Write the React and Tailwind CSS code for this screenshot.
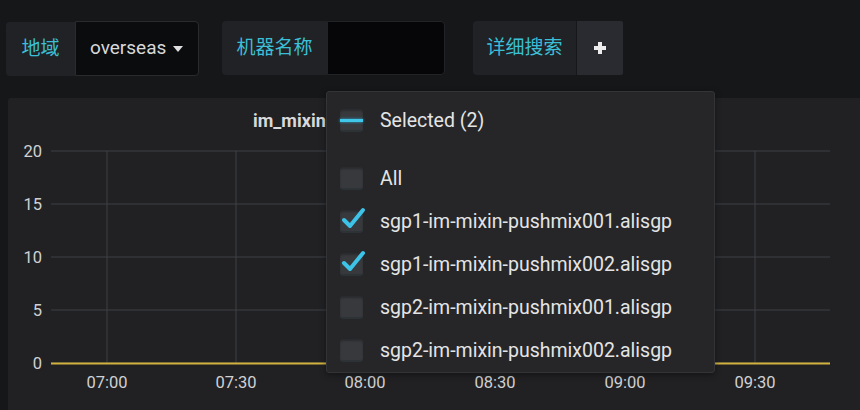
import React from "react";

const font = { fontFamily: "Roboto, 'Noto Sans CJK SC', sans-serif" };

const yTicks = [
  { label: "20", y: 151 },
  { label: "15", y: 204 },
  { label: "10", y: 257 },
  { label: "5", y: 310 },
  { label: "0", y: 363 },
];

const xTicks = [
  { label: "07:00", x: 107 },
  { label: "07:30", x: 236 },
  { label: "08:00", x: 365 },
  { label: "08:30", x: 495 },
  { label: "09:00", x: 625 },
  { label: "09:30", x: 755 },
];

const options = [
  { label: "sgp1-im-mixin-pushmix001.alisgp", checked: true },
  { label: "sgp1-im-mixin-pushmix002.alisgp", checked: true },
  { label: "sgp2-im-mixin-pushmix001.alisgp", checked: false },
  { label: "sgp2-im-mixin-pushmix002.alisgp", checked: false },
];

const Checkbox = ({ state }) => (
  <span className="relative block shrink-0 w-[23px] h-[23px] rounded-[3px] bg-[#38393d] border-b-2 border-[#2d3237] shadow-[inset_0_2px_2px_rgba(0,0,0,0.25)]">
    {state === "partial" && (
      <span className="absolute left-0 right-0 top-[10px] h-[3px] bg-[#3fc6e8] shadow-[0_0_3px_#2aa9d0]" />
    )}
    {state === "checked" && (
      <svg className="absolute -left-[1px] -top-[6px]" width="28" height="28" viewBox="0 0 28 28">
        <path d="M5 16 L11 22 L24 6" fill="none" stroke="#3dc2e8" strokeWidth="4" strokeLinecap="round" strokeLinejoin="round" />
      </svg>
    )}
  </span>
);

const Label = ({ children, className = "" }) => (
  <div className={`h-[54px] flex items-center justify-center bg-[#212226] rounded-l-[4px] text-[19px] text-[#3bbfd6] ${className}`}>
    {children}
  </div>
);

const Chart = () => (
  <svg className="block" width="852" height="312" viewBox="8 98 852 312">
    {yTicks.map((t) => (
      <g key={t.label}>
        <line x1="51" x2="830" y1={t.y} y2={t.y} stroke="#3f4044" strokeWidth="1" />
        <text x="42" y={t.y + 6} textAnchor="end" fill="#d0d1d3" fontSize="16.5" fontFamily="Roboto, sans-serif">
          {t.label}
        </text>
      </g>
    ))}
    {xTicks.map((t) => (
      <g key={t.label}>
        <line x1={t.x} x2={t.x} y1="151" y2="363" stroke="#3f4044" strokeWidth="1" />
        <text x={t.x} y="388" textAnchor="middle" fill="#d0d1d3" fontSize="16.5" fontFamily="Roboto, sans-serif">
          {t.label}
        </text>
      </g>
    ))}
    <line x1="51" x2="830" y1="363.5" y2="363.5" stroke="#d2b23c" strokeWidth="2" />
  </svg>
);

export default function App() {
  return (
    <div className="relative w-[860px] h-[410px] overflow-hidden bg-[#161719]" style={font}>
      <div className="flex items-start pt-[21px] pl-[6px]">
        <div className="flex">
          <Label className="w-[69px] mt-[1px] h-[53px]">地域</Label>
          <div className="w-[124px] h-[55px] flex items-center pl-[14px] gap-[6px] bg-[#0b0c0e] border border-[#2a2b2f] rounded-r-[4px] text-[19px] text-[#d8d9da]">
            overseas
            <svg width="12" height="8" viewBox="0 0 12 8" className="mt-[1px]">
              <path d="M1 1 L11 1 L6 7 Z" fill="#e0e0e0" />
            </svg>
          </div>
        </div>
        <div className="flex ml-[23px]">
          <Label className="w-[105px]">机器名称</Label>
          <div className="w-[118px] h-[54px] bg-[#060608] border border-[#222327] rounded-r-[4px]" />
        </div>
        <div className="flex ml-[28px]">
          <Label className="w-[103px]">详细搜索</Label>
          <div className="w-[46px] h-[54px] ml-[1px] flex items-center justify-center bg-[#2a2b30] rounded-r-[2px]">
            <svg width="16" height="16" viewBox="0 0 16 16">
              <path d="M8 2 V14 M2 8 H14" stroke="#ececec" strokeWidth="4" />
            </svg>
          </div>
        </div>
      </div>

      <div className="relative mt-[22px] ml-[8px] h-[320px] bg-[#212124] rounded-tl-[3px]">
        <div className="absolute left-[245px] top-[9px] text-[18px] font-bold text-[#d8d9da]">
          im_mixin
        </div>
        <Chart />
      </div>

      <div className="absolute left-[326px] top-[91px] w-[389px] pt-[7px] bg-[#262628] border border-[#333437] rounded-[3px] shadow-[0_2px_6px_rgba(0,0,0,0.4)] text-[19.5px] text-[#e4e4e4]">
        <div className="h-[43px] mb-[15px] flex items-center pl-[13px] gap-[17px]">
          <Checkbox state="partial" />
          <span>Selected (2)</span>
        </div>
        <div className="h-[43px] flex items-center pl-[13px] gap-[17px]">
          <Checkbox state="none" />
          <span>All</span>
        </div>
        {options.map((o) => (
          <div key={o.label} className="h-[43px] flex items-center pl-[13px] gap-[17px]">
            <Checkbox state={o.checked ? "checked" : "none"} />
            <span>{o.label}</span>
          </div>
        ))}
      </div>
    </div>
  );
}
